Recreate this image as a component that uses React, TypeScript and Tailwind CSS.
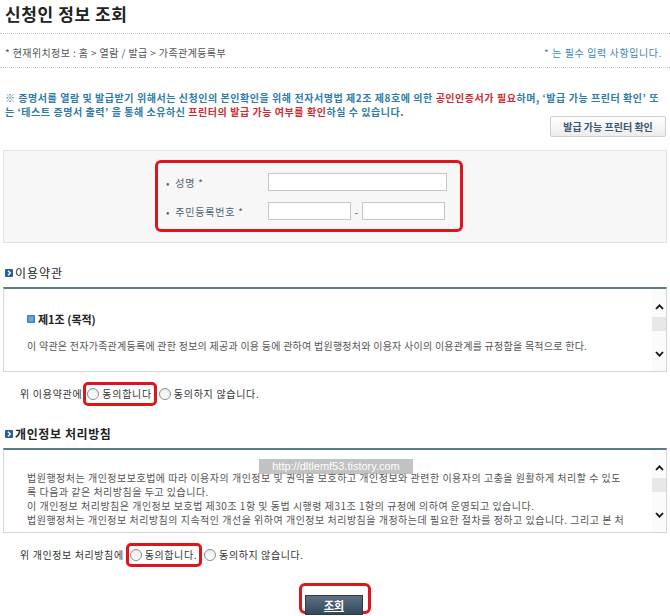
import React from "react";

function BoxIcon({ light = false }: { light?: boolean }) {
  return (
    <svg width="8" height="8" viewBox="0 0 8 8" className="shrink-0">
      <rect x="0" y="0" width="8" height="8" rx="1" fill={light ? "#3f7fc2" : "#275f9e"} />
      {light ? (
        <rect x="1.5" y="1.5" width="5" height="5" fill="#6fa6dc" />
      ) : (
        <path d="M3 1.8 L5.3 4 L3 6.2" stroke="#fff" strokeWidth="1.4" fill="none" />
      )}
    </svg>
  );
}

function ScrollBar() {
  return (
    <div className="w-[14px] shrink-0 flex flex-col items-center bg-[#fbfbfb]">
      <div className="h-[15px] shrink-0" />
      <svg width="9" height="6" viewBox="0 0 9 6" className="shrink-0">
        <path d="M1 5 L4.5 1.3 L8 5" stroke="#111" strokeWidth="1.8" fill="none" />
      </svg>
      <div className="h-[7px] shrink-0" />
      <div className="h-[14px] w-full bg-[#e8e8e8] shrink-0" />
      <div className="h-[20px] shrink-0" />
      <svg width="9" height="6" viewBox="0 0 9 6" className="shrink-0">
        <path d="M1 1 L4.5 4.7 L8 1" stroke="#111" strokeWidth="1.8" fill="none" />
      </svg>
    </div>
  );
}

function Radio() {
  return (
    <span className="inline-block w-[12px] h-[12px] rounded-full border border-[#8c8c8c] bg-linear-to-b from-[#ececec] to-white shrink-0" />
  );
}

export default function App() {
  return (
    <div className="w-[670px] h-[616px] overflow-hidden bg-white text-[#333] font-['Noto_Sans_CJK_KR',sans-serif]">
      {/* title */}
      <div className="h-[34px] border-b border-dotted border-[#c4c4c4] pl-[5px] pt-[4px]">
        <h1 className="text-[17px] leading-[20px] tracking-[0.6px] font-bold text-[#222]">신청인 정보 조회</h1>
      </div>

      {/* breadcrumb */}
      <div className="h-[34px] border-b border-dotted border-[#c4c4c4] flex items-center justify-between pl-[5px] pr-[8px] pt-[5px] text-[10px] leading-[14px]">
        <span className="text-[#555] tracking-[0.4px]">* 현재위치정보 : 홈 &gt; 열람 / 발급 &gt; 가족관계등록부</span>
        <span className="text-[#3d85bb] tracking-[0.6px]">* 는 필수 입력 사항입니다.</span>
      </div>

      {/* notice */}
      <div className="mt-[23px] h-[25px] pl-[5px] text-[10px] leading-[14px] tracking-[0.55px] font-bold text-[#2e7aa9] whitespace-nowrap">
        <div>
          ※ 증명서를 열람 및 발급받기 위해서는 신청인의 본인확인을 위해 전자서명법 제2조 제8호에 의한{" "}
          <span className="text-[#cf2a2f]">공인인증서가 필요</span>하며, ‘발급 가능 프린터 확인’ 또
        </div>
        <div>
          는 ‘테스트 증명서 출력’ 을 통해 소유하신{" "}
          <span className="text-[#cf2a2f]">프린터의 발급 가능 여부를 확인</span>하실 수 있습니다.
        </div>
      </div>
      <div className="flex justify-end pr-[4px]">
        <button className="h-[21px] w-[116px] border border-[#cfcfcf] rounded-[2px] bg-linear-to-b from-white to-[#ececec] text-[10px] leading-[14px] text-[#3b5670] font-bold">
          발급 가능 프린터 확인
        </button>
      </div>

      {/* form box */}
      <div className="mt-[13px] mx-[3px] h-[93px] border border-[#e2e2e2] bg-[#f7f7f7] pt-[9px] pl-[151px]">
        <div className="w-[308px] h-[72px] border-[3px] border-[#e0141c] rounded-[6px] pl-[8px] pt-[10px] text-[10px] tracking-[0.8px] text-[#4b6275]">
          <div className="flex items-center h-[18px]">
            <span className="w-[102px] flex items-center gap-[5px]">
              <span>•</span>
              <span>성명 *</span>
            </span>
            <span className="w-[179px] h-[18px] border border-[#c6c6c6] bg-white" />
          </div>
          <div className="flex items-center h-[18px] mt-[11px]">
            <span className="w-[102px] flex items-center gap-[5px]">
              <span>•</span>
              <span>주민등록번호 *</span>
            </span>
            <span className="w-[83px] h-[18px] border border-[#c6c6c6] bg-white" />
            <span className="w-[11px] text-center text-[#555] tracking-normal">-</span>
            <span className="w-[83px] h-[18px] border border-[#c6c6c6] bg-white" />
          </div>
        </div>
      </div>

      {/* terms heading */}
      <div className="mt-[22px] h-[16px] pl-[5px] flex items-center gap-[2px] text-[12px] leading-[16px] tracking-[1px] text-[#222]">
        <BoxIcon />
        <span>이용약관</span>
      </div>
      <div className="mt-[6px] mx-[3px] h-[85px] border-t-2 border-t-[#5c7c84] border-x border-b border-x-[#d6d6d6] border-b-[#d6d6d6] flex">
        <div className="flex-1 pl-[23px] pt-[22px] overflow-hidden">
          <div className="flex items-center gap-[3px] h-[16px] text-[11px] leading-[16px] font-bold text-[#222]">
            <BoxIcon light />
            <span>제1조 (목적)</span>
          </div>
          <p className="mt-[12px] text-[10px] leading-[14px] tracking-[0.25px] text-[#555] whitespace-nowrap">
            이 약관은 전자가족관계등록에 관한 정보의 제공과 이용 등에 관하여 법원행정처와 이용자 사이의 이용관계를 규정함을 목적으로 한다.
          </p>
        </div>
        <ScrollBar />
      </div>

      {/* agree 1 */}
      <div className="mt-[10px] h-[24px] pl-[20px] flex items-center text-[10px] leading-[14px] tracking-[0.7px] text-[#333]">
        <span>위 이용약관에</span>
        <span className="ml-[1px] h-[24px] flex items-center border-[3px] border-[#e0141c] rounded-[5px] pl-[1px] pr-[2px] gap-[3px]">
          <Radio />
          동의합니다
        </span>
        <span className="ml-[2px] flex items-center gap-[3px]">
          <Radio />
          동의하지 않습니다.
        </span>
      </div>

      {/* privacy heading */}
      <div className="mt-[20px] h-[16px] pl-[5px] flex items-center gap-[2px] text-[12px] leading-[16px] tracking-[0.6px] font-bold text-[#222]">
        <BoxIcon />
        <span>개인정보 처리방침</span>
      </div>
      <div className="relative mt-[6px] mx-[3px] h-[85px] border-t-2 border-t-[#5c7c84] border-x border-b border-x-[#d6d6d6] border-b-[#d6d6d6] flex">
        <div className="flex-1 pl-[23px] pt-[21px] overflow-hidden text-[10px] leading-[14px] tracking-[0.5px] text-[#555] whitespace-nowrap">
          <div>법원행정처는 개인정보보호법에 따라 이용자의 개인정보 및 권익을 보호하고 개인정보와 관련한 이용자의 고충을 원활하게 처리할 수 있도</div>
          <div>록 다음과 같은 처리방침을 두고 있습니다.</div>
          <div>이 개인정보 처리방침은 개인정보 보호법 제30조 1항 및 동법 시행령 제31조 1항의 규정에 의하여 운영되고 있습니다.</div>
          <div>법원행정처는 개인정보 처리방침의 지속적인 개선을 위하여 개인정보 처리방침을 개정하는데 필요한 절차를 정하고 있습니다. 그리고 본 처</div>
        </div>
        <ScrollBar />
        <div className="absolute left-[255px] top-[9px] w-[154px] h-[15px] bg-[#9a9a9a]/60 flex items-center justify-center font-['Liberation_Sans',sans-serif] text-[11px] text-white">
          http://dltlemf53.tistory.com
        </div>
      </div>

      {/* agree 2 */}
      <div className="mt-[10px] h-[24px] pl-[20px] flex items-center text-[10px] leading-[14px] tracking-[0.6px] text-[#333]">
        <span>위 개인정보 처리방침에</span>
        <span className="ml-[2px] h-[24px] flex items-center border-[3px] border-[#e0141c] rounded-[5px] pl-[1px] pr-[2px] gap-[3px]">
          <Radio />
          동의합니다.
        </span>
        <span className="ml-[2px] flex items-center gap-[3px]">
          <Radio />
          동의하지 않습니다.
        </span>
      </div>

      {/* submit */}
      <div className="mt-[16px] flex justify-center">
        <div className="w-[72px] h-[31px] border-[3px] border-[#e0141c] rounded-[6px] pl-[3px] pt-[5px]">
          <button className="w-[58px] h-[20px] bg-linear-to-b from-[#5c7284] to-[#33485a] border border-[#2a3a48] text-white text-[11px] leading-[14px] font-bold underline">
            조회
          </button>
        </div>
      </div>
    </div>
  );
}
